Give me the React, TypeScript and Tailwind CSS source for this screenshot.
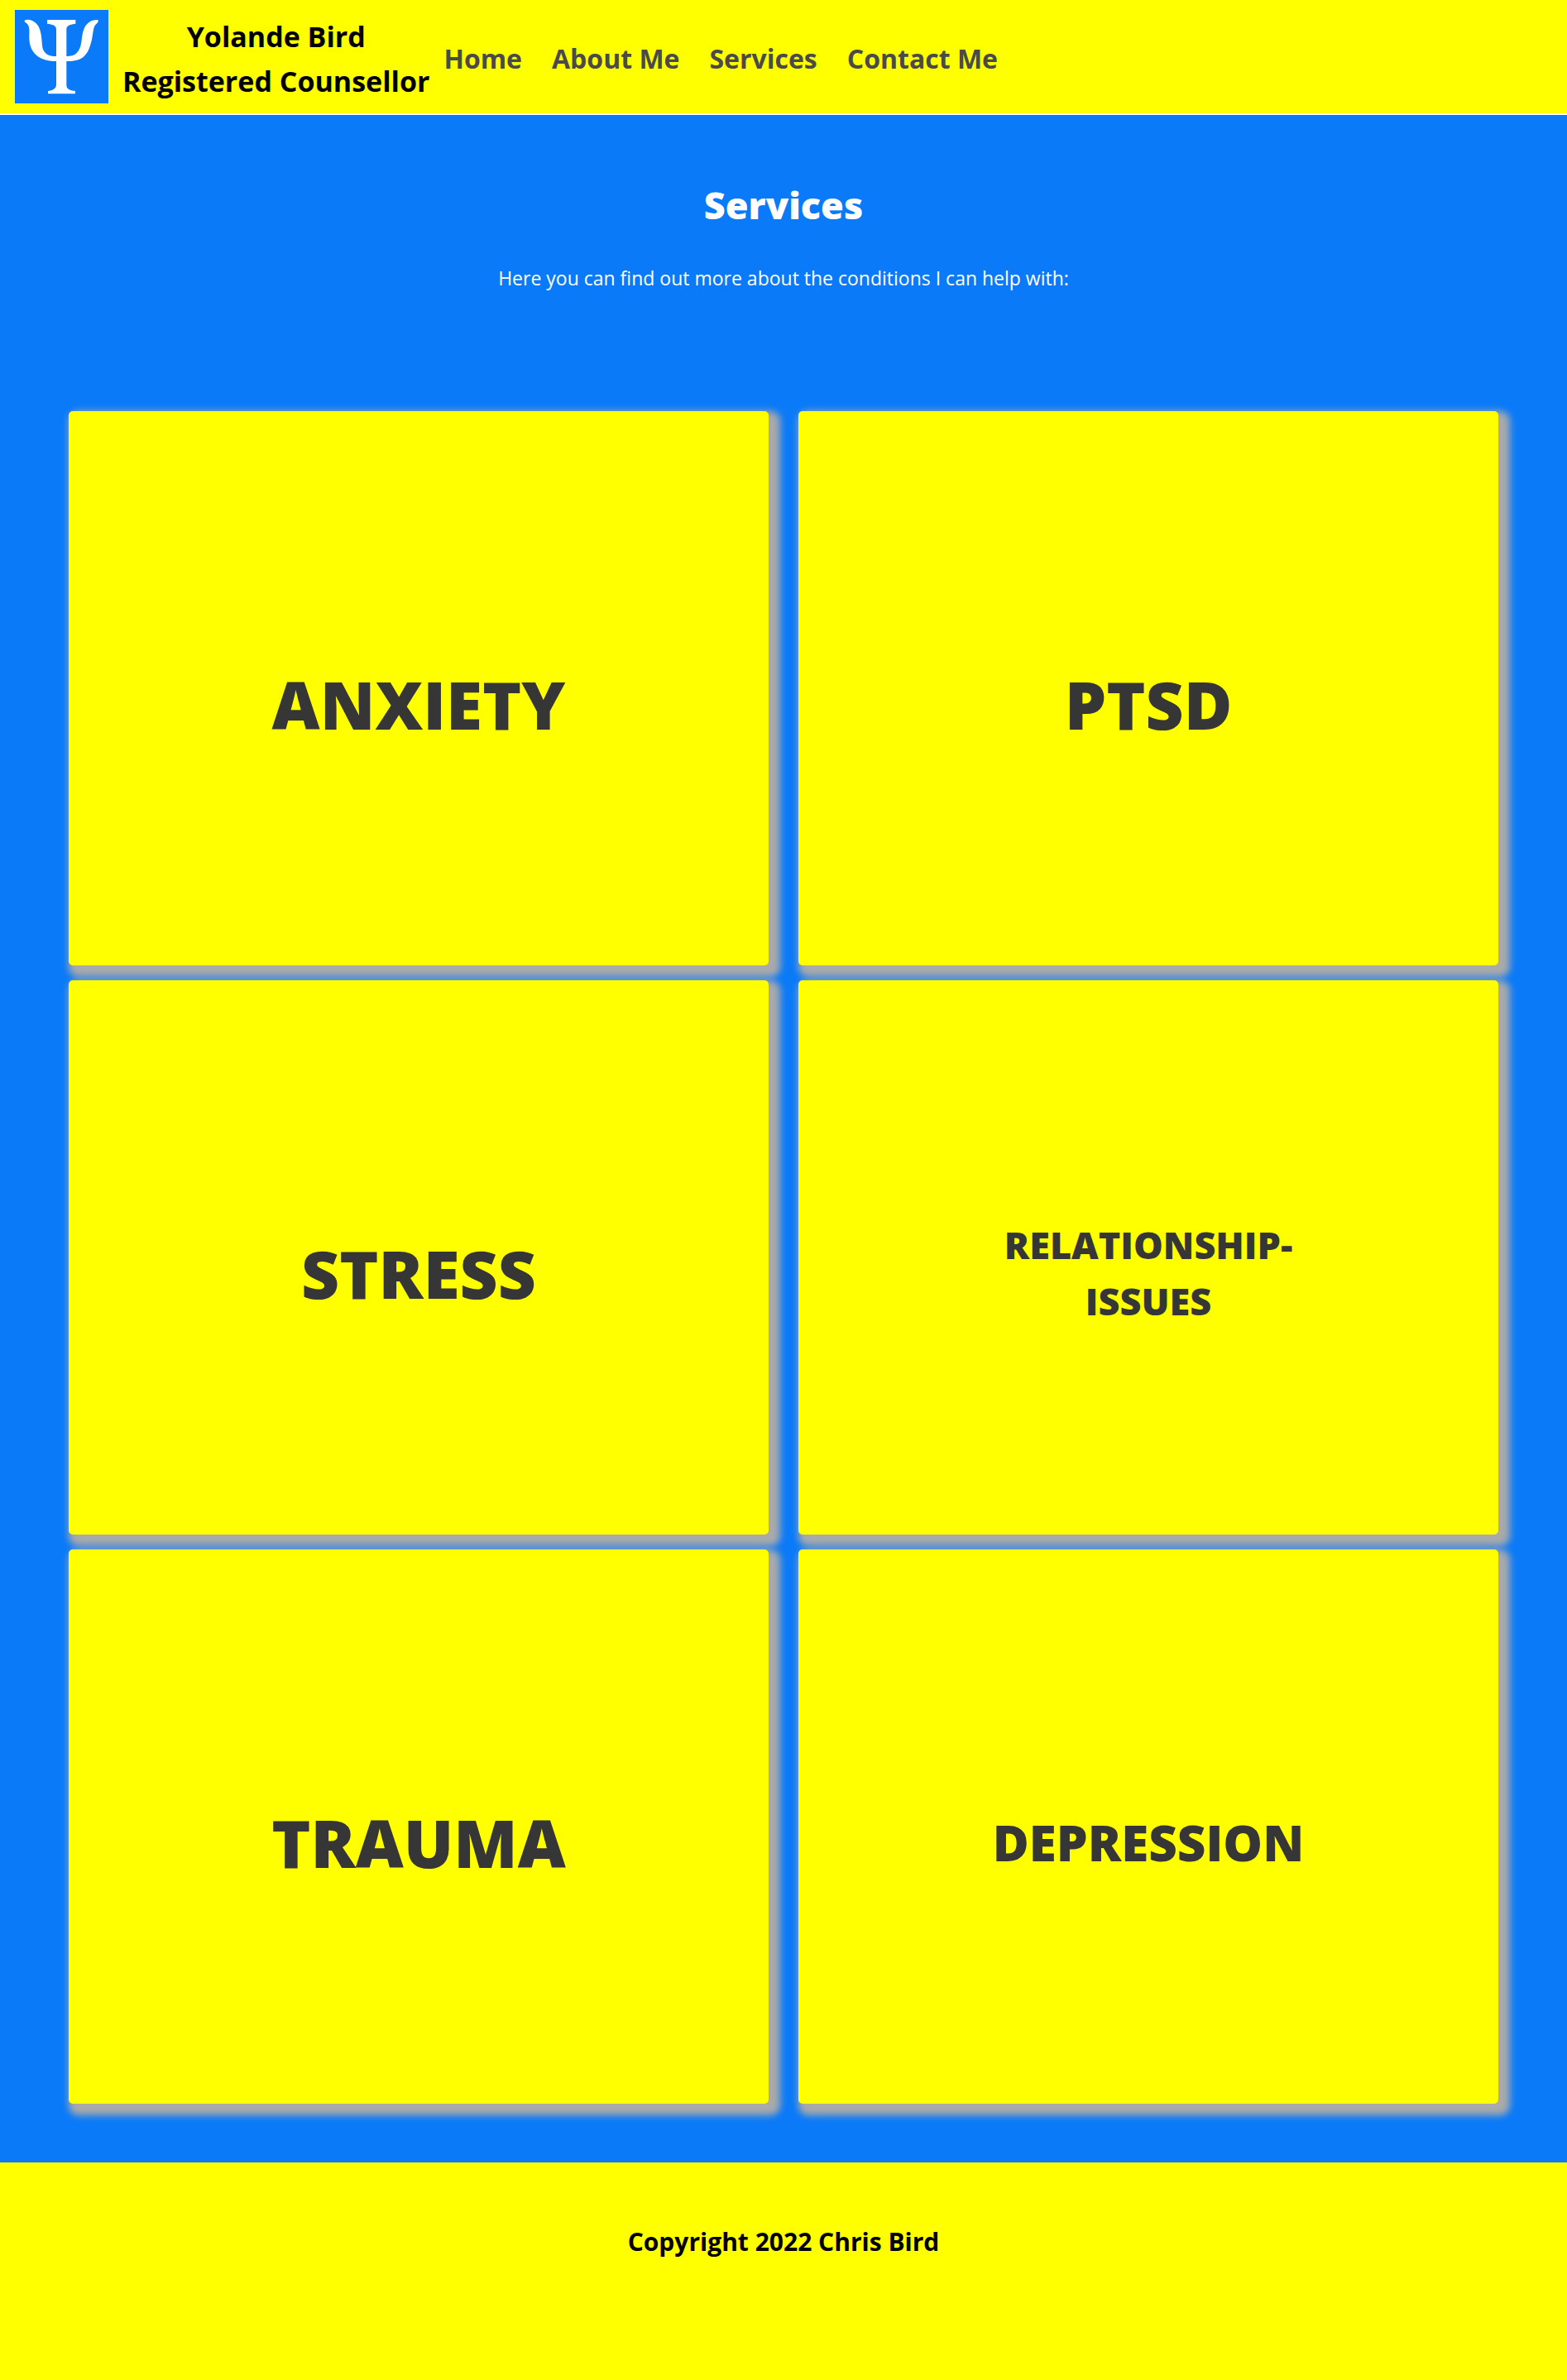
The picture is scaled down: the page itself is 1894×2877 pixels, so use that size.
const links = ["Home", "About Me", "Services", "Contact Me"];

const services = [
  { name: "ANXIETY", size: "text-[80px] leading-[120px]" },
  { name: "PTSD", size: "text-[80px] leading-[120px]" },
  { name: "STRESS", size: "text-[80px] leading-[120px]" },
  { name: "RELATIONSHIP-ISSUES", size: "text-[45px] leading-[68px]" },
  { name: "TRAUMA", size: "text-[80px] leading-[120px]" },
  { name: "DEPRESSION", size: "text-[60px] leading-[90px]" },
];

function PsiLogo() {
  return (
    <svg viewBox="54 36 339 339" className="size-[113px] shrink-0" role="img" aria-label="Psi">
      <rect x="54" y="36" width="339" height="339" fill="#0a7af8" />
      <g fill="#ffffff">
        <path d="M171 72H274V86C256 88 241 92 241 106V308C241 325 258 328 273 330V340H174V330C190 328 204 323 204 306V106C204 92 190 88 171 86Z" />
        <path d="M89 74C96 70 108 71 117 75C139 85 147 107 150 132C154 163 150 179 167 194C177 203 190 204 205 204H240C256 204 268 202 278 192C301 170 292 137 304 106C313 83 332 70 355 72C358 77 355 82 349 87C336 98 339 121 332 148C326 171 320 190 306 203C287 220 265 222 240 222H205C179 222 151 217 132 200C112 182 106 160 106 134C106 113 109 96 97 85C92 81 88 79 89 74Z" />
      </g>
    </svg>
  );
}

export default function App() {
  return (
    <div className="bg-[#0a7af8] font-['Segoe_UI','Open_Sans',sans-serif]">
      <header className="flex items-center gap-[17px] border-b-2 border-white bg-[#ffff00] px-[18px] py-3">
        <a href="#home">
          <PsiLogo />
        </a>
        <p className="pt-1 text-center text-[34px] leading-[54px] font-bold text-black">
          Yolande Bird
          <br />
          Registered Counsellor
        </p>
        <nav className="flex gap-9 pt-1 text-[32px] leading-[48px] font-bold text-[#4a4a4a]">
          {links.map((link) => (
            <a key={link} href="#">
              {link}
            </a>
          ))}
        </nav>
      </header>

      <main className="px-[83px] pt-[77px] pb-[71px]">
        <div className="text-center text-white">
          <h1 className="text-[45px] leading-[64px] font-extrabold">Services</h1>
          <p className="mt-[38px] text-[23px] leading-9">
            Here you can find out more about the conditions I can help with:
          </p>
        </div>
        <div className="mt-[143px] grid grid-cols-2 gap-x-9 gap-y-[18px]">
          {services.map((service) => (
            <a
              key={service.name}
              href="#"
              className="flex min-h-[670px] items-center justify-center rounded-[5px] bg-[#ffff00] pt-[38px] shadow-[7px_7px_8px_7px_#aaaaaa]"
            >
              <h2 className={`${service.size} max-w-[400px] text-center font-extrabold text-[#363636]`}>
                {service.name}
              </h2>
            </a>
          ))}
        </div>
      </main>

      <footer className="bg-[#ffff00] pt-[72px] pb-[143px] text-center text-[30px] leading-[48px] font-bold text-black">
        <p>Copyright 2022 Chris Bird</p>
      </footer>
    </div>
  );
}
